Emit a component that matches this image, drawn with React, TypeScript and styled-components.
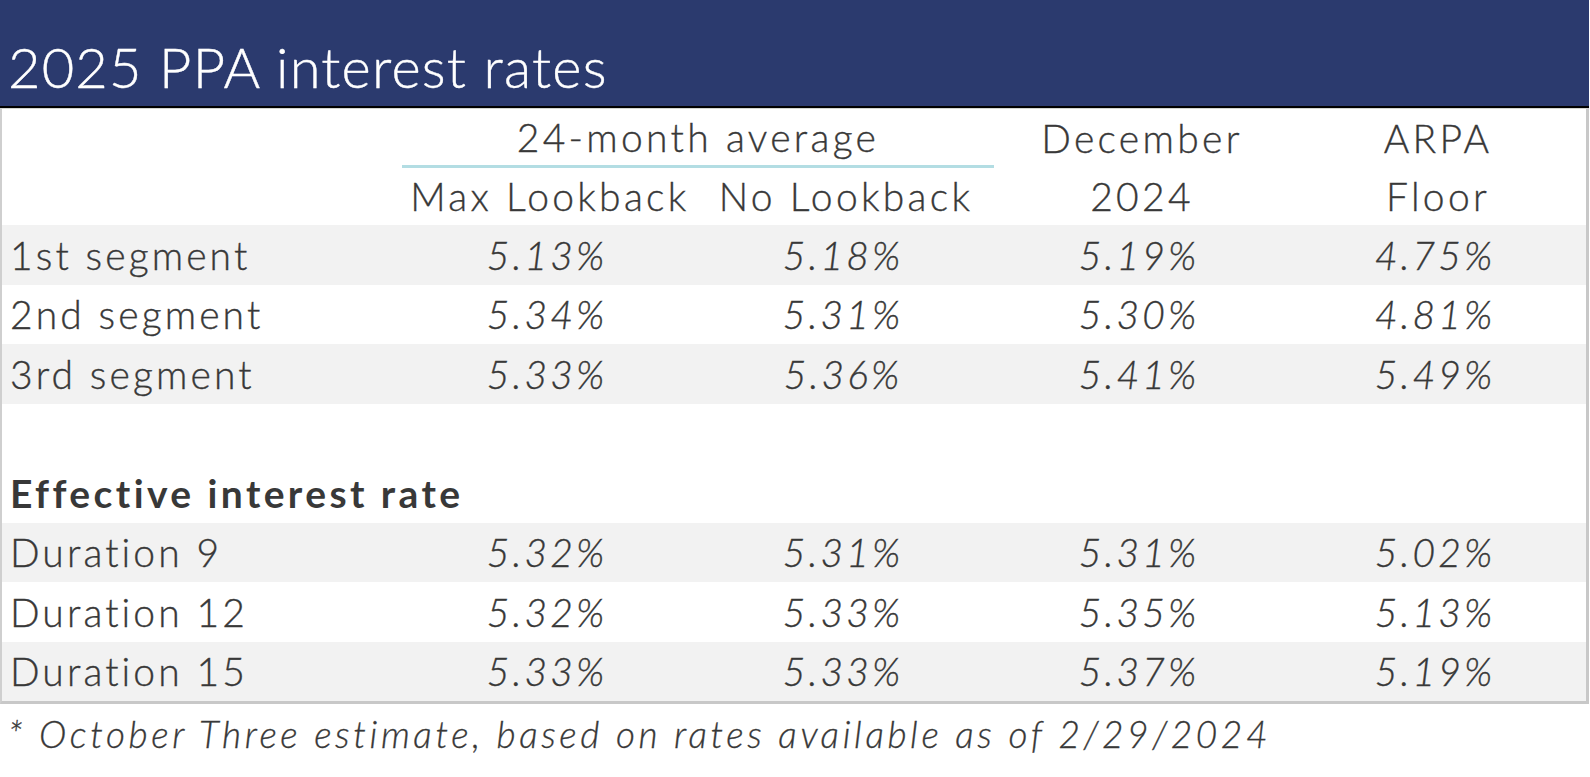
import React from 'react';
import styled, { createGlobalStyle } from 'styled-components';

const GlobalStyle = createGlobalStyle`
  html, body {
    margin: 0;
    padding: 0;
    background: #ffffff;
  }
  body {
    font-family: Lato, 'Open Sans', sans-serif;
    color: #383838;
  }
`;

const COLS = '400px repeat(4, 296px)';

const Slide = styled.div`
  width: 1589px;
  display: flex;
  flex-direction: column;
`;

const TitleBar = styled.div`
  height: 108px;
  box-sizing: border-box;
  background: #2b3a6e;
  border-bottom: 2px solid #000000;
  display: flex;
  align-items: flex-end;
  padding: 0 0 11px 8px;
`;

const Title = styled.h1`
  margin: 0;
  font-family: Lato, sans-serif;
  font-weight: 300;
  font-size: 56px;
  line-height: 1;
  color: #ffffff;
  letter-spacing: 1.2px;
  -webkit-text-stroke: 0.4px #ffffff;
`;

const Table = styled.div`
  border-top: 1px solid #d4d6d0;
  border-left: 2px solid #cfcfcf;
  border-right: 3px solid #c8c8c8;
  border-bottom: 3px solid #c8c8c8;
  display: flex;
  flex-direction: column;
`;

const HeadGrid = styled.div`
  display: grid;
  grid-template-columns: ${COLS};
  grid-template-rows: 58px 58px;
`;

const HeadCell = styled.div<{ $col: number; $row: number; $span?: number; $rule?: boolean }>`
  grid-column: ${p => p.$col} / span ${p => p.$span ?? 1};
  grid-row: ${p => p.$row};
  display: flex;
  align-items: center;
  justify-content: center;
  font-size: 39px;
  font-weight: 300;
  letter-spacing: 3.3px;
  color: #383838;
  -webkit-text-stroke: 0.35px #383838;
  white-space: nowrap;
  border-bottom: ${p => (p.$rule ? '3px solid #b3dde3' : 'none')};
  margin-bottom: ${p => (p.$rule ? '-1px' : '0')};
`;

const Row = styled.div<{ $shaded?: boolean }>`
  display: grid;
  grid-template-columns: ${COLS};
  height: 59.5px;
  align-items: center;
  background: ${p => (p.$shaded ? '#f2f2f2' : '#ffffff')};
`;

const Label = styled.div<{ $bold?: boolean }>`
  padding-left: 8px;
  font-size: 39px;
  font-weight: ${p => (p.$bold ? 700 : 300)};
  letter-spacing: ${p => (p.$bold ? '3.4px' : '3.1px')};
  color: #383838;
  -webkit-text-stroke: ${p => (p.$bold ? '0' : '0.35px #383838')};
  white-space: nowrap;
`;

const Value = styled.div`
  text-align: center;
  font-size: 39px;
  font-style: italic;
  font-weight: 300;
  letter-spacing: 3.1px;
  color: #383838;
  -webkit-text-stroke: 0.35px #383838;
  padding-right: 6px;
`;

const Footnote = styled.p`
  margin: 7px 0 0 8px;
  font-size: 37px;
  font-style: italic;
  font-weight: 300;
  letter-spacing: 3.6px;
  color: #383838;
  -webkit-text-stroke: 0.3px #383838;
  white-space: nowrap;
`;

type RateRow = { label: string; values: string[] };

const segments: RateRow[] = [
  { label: '1st segment', values: ['5.13%', '5.18%', '5.19%', '4.75%'] },
  { label: '2nd segment', values: ['5.34%', '5.31%', '5.30%', '4.81%'] },
  { label: '3rd segment', values: ['5.33%', '5.36%', '5.41%', '5.49%'] },
];

const durations: RateRow[] = [
  { label: 'Duration 9', values: ['5.32%', '5.31%', '5.31%', '5.02%'] },
  { label: 'Duration 12', values: ['5.32%', '5.33%', '5.35%', '5.13%'] },
  { label: 'Duration 15', values: ['5.33%', '5.33%', '5.37%', '5.19%'] },
];

const RateRows = ({ rows }: { rows: RateRow[] }) => (
  <>
    {rows.map((r, i) => (
      <Row key={r.label} $shaded={i % 2 === 0}>
        <Label>{r.label}</Label>
        {r.values.map((v, j) => (
          <Value key={j}>{v}</Value>
        ))}
      </Row>
    ))}
  </>
);

const App = () => (
  <>
    <GlobalStyle />
    <Slide>
      <TitleBar>
        <Title>2025 PPA interest rates</Title>
      </TitleBar>
      <Table>
        <HeadGrid>
          <HeadCell $col={2} $row={1} $span={2} $rule>24-month average</HeadCell>
          <HeadCell $col={2} $row={2}>Max Lookback</HeadCell>
          <HeadCell $col={3} $row={2}>No Lookback</HeadCell>
          <HeadCell $col={4} $row={1}>December</HeadCell>
          <HeadCell $col={4} $row={2}>2024</HeadCell>
          <HeadCell $col={5} $row={1}>ARPA</HeadCell>
          <HeadCell $col={5} $row={2}>Floor</HeadCell>
        </HeadGrid>
        <RateRows rows={segments} />
        <Row />
        <Row>
          <Label $bold>Effective interest rate</Label>
        </Row>
        <RateRows rows={durations} />
      </Table>
      <Footnote>* October Three estimate, based on rates available as of 2/29/2024</Footnote>
    </Slide>
  </>
);

export default App;
